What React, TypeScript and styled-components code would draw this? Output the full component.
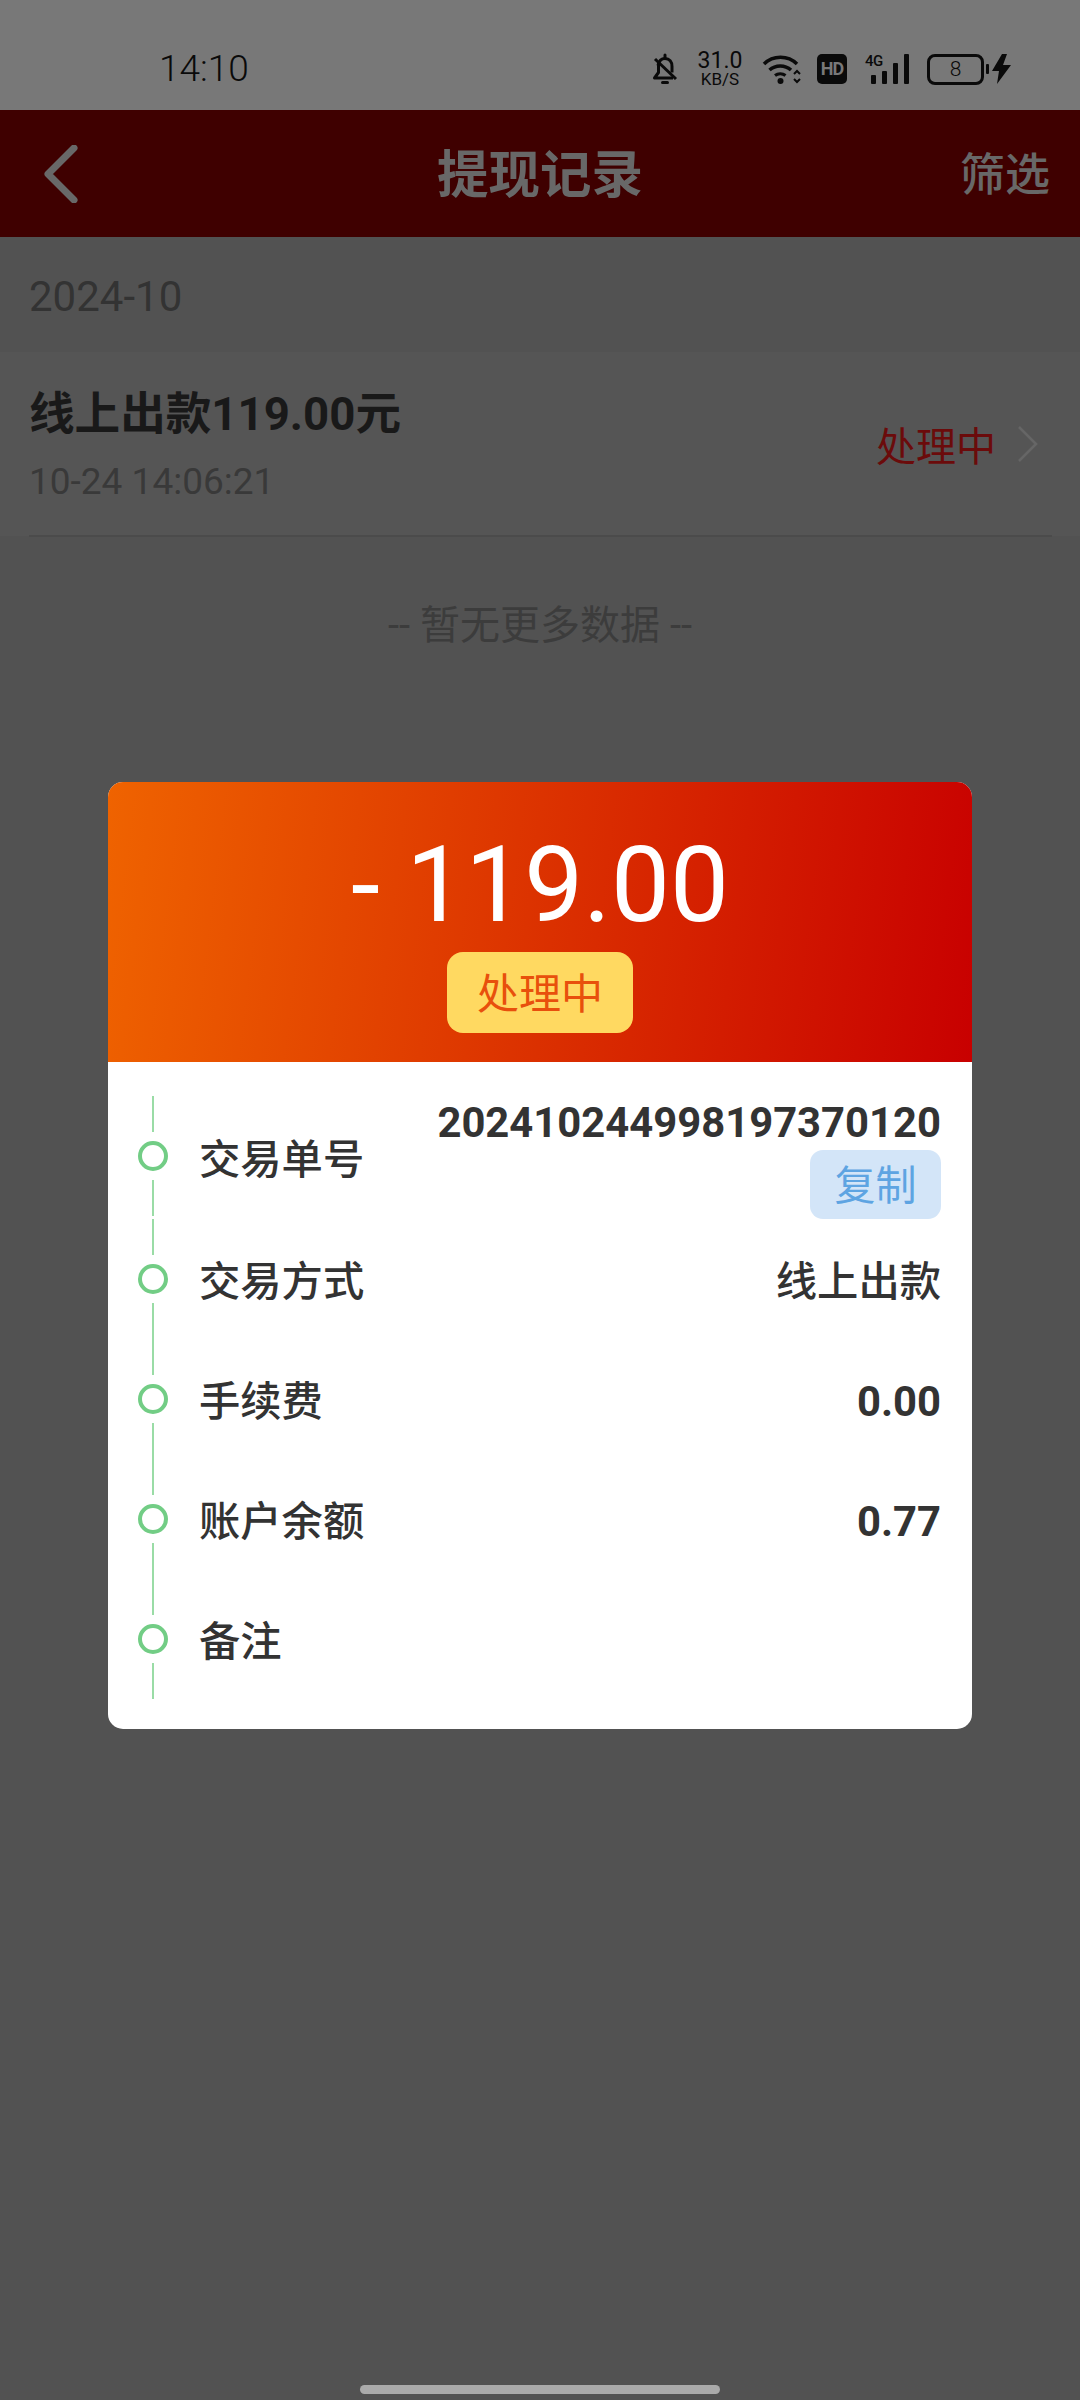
import React from "react";
import styled, { createGlobalStyle } from "styled-components";

const FONT = `Roboto, "Noto Sans CJK SC", sans-serif`;

const GlobalStyle = createGlobalStyle`
  html, body {
    margin: 0;
    padding: 0;
    background: #525252;
    font-family: ${FONT};
  }
`;

const Screen = styled.div({
  position: "relative",
  width: 1080,
  height: 2400,
  overflow: "hidden",
  display: "flex",
  flexDirection: "column",
  background: "#525252",
});

const StatusBar = styled.div({
  height: 110,
  flexShrink: 0,
  boxSizing: "border-box",
  padding: "28px 69px 0 159px",
  display: "flex",
  alignItems: "center",
  justifyContent: "space-between",
  background: "#787878",
  color: "#0a0a0a",
});

const Clock = styled.span({
  fontSize: 37,
  fontWeight: 300,
  lineHeight: "40px",
});

const StatusIcons = styled.div({
  display: "flex",
  alignItems: "center",
  height: 30,
});

const Speed = styled.div({
  width: 46,
  marginLeft: 19,
  display: "flex",
  flexDirection: "column",
  alignItems: "center",
  "& > b": { fontSize: 23, fontWeight: 400, lineHeight: "21px" },
  "& > span": { fontSize: 17, fontWeight: 400, lineHeight: "17px" },
});

const HdBadge = styled.span({
  width: 30,
  height: 30,
  marginLeft: 15,
  borderRadius: 5,
  background: "#0a0a0a",
  color: "#787878",
  fontSize: 18,
  fontWeight: 700,
  letterSpacing: -1,
  lineHeight: "30px",
  textAlign: "center",
});

const Network = styled.div({
  position: "relative",
  width: 44,
  height: 30,
  marginLeft: 18,
  "& > span": {
    position: "absolute",
    left: 0,
    top: 0,
    fontSize: 15,
    fontWeight: 500,
    letterSpacing: -0.5,
    lineHeight: "15px",
  },
  "& > svg": { position: "absolute", left: 0, top: 0 },
});

const Battery = styled.div({
  width: 51,
  height: 25,
  marginLeft: 18,
  border: "3px solid #0a0a0a",
  borderRadius: 8,
  fontSize: 21,
  fontWeight: 300,
  lineHeight: "25px",
  textAlign: "center",
});

const BatteryTip = styled.span({
  width: 3,
  height: 10,
  marginLeft: 2,
  background: "#0a0a0a",
  borderRadius: 1,
});

const NavBar = styled.div({
  height: 127,
  flexShrink: 0,
  boxSizing: "border-box",
  padding: "4px 30px 0",
  display: "grid",
  gridTemplateColumns: "1fr auto 1fr",
  alignItems: "center",
  background: "#3f0000",
  color: "#686868",
});

const BackSlot = styled.div({
  display: "flex",
  paddingLeft: 13,
  marginTop: -4,
});

const NavTitle = styled.div({
  fontSize: 51.5,
  fontWeight: 700,
  lineHeight: "60px",
});

const NavAction = styled.div({
  justifySelf: "end",
  fontSize: 45,
  lineHeight: "60px",
  fontWeight: 500,
});

const MonthRow = styled.div({
  height: 115,
  flexShrink: 0,
  boxSizing: "border-box",
  padding: "4px 29px 0",
  display: "flex",
  alignItems: "center",
  fontSize: 42,
  color: "#333333",
  background: "#525252",
});

const RecordRow = styled.div({
  height: 184,
  flexShrink: 0,
  boxSizing: "border-box",
  margin: 0,
  background: "#555555",
  padding: "0 28px 0 29px",
});

const RecordInner = styled.div({
  height: 183,
  display: "flex",
  alignItems: "center",
  justifyContent: "space-between",
  borderBottom: "2px solid #4b4b4b",
  boxSizing: "content-box",
});

const RecordText = styled.div({
  display: "flex",
  flexDirection: "column",
  gap: 12,
  paddingTop: 4,
});

const RecordTitle = styled.div({
  fontSize: 45.6,
  fontWeight: 700,
  lineHeight: "60px",
  color: "#191919",
});

const RecordTime = styled.div({
  fontSize: 37,
  lineHeight: "50px",
  color: "#393939",
});

const RecordStatus = styled.div({
  display: "flex",
  alignItems: "center",
  gap: 21,
  marginRight: 13,
  fontSize: 40,
  color: "#6b0b0b",
});

const EndNote = styled.div({
  marginTop: 60,
  textAlign: "center",
  fontSize: 40,
  lineHeight: "60px",
  color: "#3c3c3c",
});

// sits over the list, below the status bar, and centres the dialog
const ModalLayer = styled.div({
  position: "absolute",
  left: 0,
  right: 0,
  top: 110,
  bottom: 0,
  display: "flex",
  alignItems: "center",
  justifyContent: "center",
});

const Card = styled.div({
  width: 864,
  borderRadius: 15,
  overflow: "hidden",
  background: "#ffffff",
});

const CardHead = styled.div({
  height: 280,
  boxSizing: "border-box",
  paddingTop: 42,
  display: "flex",
  flexDirection: "column",
  alignItems: "center",
  background: "linear-gradient(97deg, #ef6300 0%, #c80000 100%)",
});

const Amount = styled.div({
  fontSize: 105,
  lineHeight: "124px",
  color: "#ffffff",
});

const StateChip = styled.div({
  width: 186,
  height: 81,
  marginTop: 4,
  borderRadius: 16,
  background: "#ffd961",
  color: "#e8500c",
  fontSize: 42,
  lineHeight: "86px",
  textAlign: "center",
  overflow: "hidden",
});

const CardBody = styled.div({
  padding: "34px 31px 30px 30px",
});

const DetailRow = styled.div({
  display: "flex",
  alignItems: "center",
  minHeight: 120,
});

const Timeline = styled.div({
  alignSelf: "flex-start",
  width: 30,
  height: 120,
  flexShrink: 0,
  display: "flex",
  flexDirection: "column",
  alignItems: "center",
});

const TimelineLine = styled.span<{ $pos: "top" | "bottom" }>`
  width: 2px;
  height: 36px;
  background: #9adca6;
  margin-${({ $pos }) => ($pos === "top" ? "bottom" : "top")}: 9px;
`;

const TimelineDot = styled.span({
  width: 30,
  height: 30,
  boxSizing: "border-box",
  border: "4px solid #72cd85",
  borderRadius: "50%",
});

const Label = styled.div({
  marginLeft: 31,
  paddingTop: 6,
  fontSize: 41.3,
  fontWeight: 500,
  lineHeight: "54px",
  color: "#333333",
});

const Value = styled.div<{ $text?: boolean; $copyable?: boolean }>`
  margin-left: auto;
  padding-top: ${({ $copyable }) => ($copyable ? 0 : 6)}px;
  display: flex;
  flex-direction: column;
  align-items: flex-end;
  font-size: ${({ $text }) => ($text ? 41.3 : 41.8)}px;
  font-weight: ${({ $text }) => ($text ? 500 : 700)};
  line-height: 54px;
  color: #333333;
`;

const CopyButton = styled.div({
  width: 131,
  height: 69,
  borderRadius: 13,
  background: "#d3e5f8",
  color: "#5ea4e2",
  fontSize: 41,
  fontWeight: 400,
  lineHeight: "73px",
  textAlign: "center",
  overflow: "hidden",
});

const HomeIndicator = styled.div({
  position: "absolute",
  left: 360,
  bottom: 6,
  width: 360,
  height: 9,
  borderRadius: 5,
  background: "#aaaaaa",
});

const BellOffIcon = () => (
  <svg width="26" height="32" viewBox="0 0 26 32" fill="none" stroke="#0a0a0a" strokeWidth="3">
    <path d="M13 2v3" strokeLinecap="round" />
    <path d="M6 12.500c1-5 3.500-7 7-7 4.500 0 7 3.500 7 8v6" />
    <path d="M6.500 11.500v8L2.500 25H21" strokeLinejoin="round" />
    <path d="M3 6l21 20" />
    <path d="M10.500 29.500h5" strokeLinecap="round" />
  </svg>
);

const WifiIcon = () => (
  <svg width="40" height="30" viewBox="0 0 40 30" fill="none" stroke="#0a0a0a" style={{ marginLeft: 19 }}>
    <path d="M2 10C11 1 26 1 35 10" strokeWidth="3.500" />
    <path d="M7.500 16C13.500 10.500 23 10.500 29 16" strokeWidth="3.500" />
    <path d="M13 21.500c3-2.500 7.500-2.500 10.500 0" strokeWidth="3" />
    <circle cx="18.500" cy="27" r="3" fill="#0a0a0a" stroke="none" />
    <path d="M32 20l3-3 3 3M32 25l3 3 3-3" strokeWidth="2" />
  </svg>
);

const SignalBars = () => (
  <svg width="44" height="30" viewBox="0 0 44 30" fill="#0a0a0a">
    <rect x="6" y="21" width="5" height="9" rx="1" />
    <rect x="17" y="17" width="5" height="13" rx="1" />
    <rect x="28" y="9" width="5" height="21" rx="1" />
    <rect x="39" y="0" width="5" height="30" rx="1" />
  </svg>
);

const BoltIcon = () => (
  <svg width="19" height="30" viewBox="0 0 19 30" fill="#0a0a0a" style={{ marginLeft: 3 }}>
    <path d="M10 0L0 17h7L5 30l14-19h-8l4-11z" />
  </svg>
);

const BackIcon = () => (
  <svg width="36" height="58" viewBox="0 0 36 58" fill="none" stroke="#686868" strokeWidth="7" strokeLinecap="round" strokeLinejoin="round">
    <path d="M31 3L5 29l26 26" />
  </svg>
);

const ChevronIcon = () => (
  <svg width="22" height="38" viewBox="0 0 22 38" fill="none" stroke="#666666" strokeWidth="2.500">
    <path d="M2 2l17 17L2 36" />
  </svg>
);

interface Detail {
  label: string;
  value?: string;
  copyable?: boolean;
  isText?: boolean;
}

const details: Detail[] = [
  { label: "交易单号", value: "202410244998197370120", copyable: true },
  { label: "交易方式", value: "线上出款", isText: true },
  { label: "手续费", value: "0.00" },
  { label: "账户余额", value: "0.77" },
  { label: "备注" },
];

export default function App() {
  return (
    <Screen>
      <GlobalStyle />
      <StatusBar>
        <Clock>14:10</Clock>
        <StatusIcons>
          <BellOffIcon />
          <Speed>
            <b>31.0</b>
            <span>KB/S</span>
          </Speed>
          <WifiIcon />
          <HdBadge>HD</HdBadge>
          <Network>
            <SignalBars />
            <span>4G</span>
          </Network>
          <Battery>8</Battery>
          <BatteryTip />
          <BoltIcon />
        </StatusIcons>
      </StatusBar>
      <NavBar>
        <BackSlot>
          <BackIcon />
        </BackSlot>
        <NavTitle>提现记录</NavTitle>
        <NavAction>筛选</NavAction>
      </NavBar>
      <MonthRow>2024-10</MonthRow>
      <RecordRow>
        <RecordInner>
          <RecordText>
            <RecordTitle>线上出款119.00元</RecordTitle>
            <RecordTime>10-24 14:06:21</RecordTime>
          </RecordText>
          <RecordStatus>
            处理中
            <ChevronIcon />
          </RecordStatus>
        </RecordInner>
      </RecordRow>
      <EndNote>-- 暂无更多数据 --</EndNote>

      <ModalLayer>
        <Card>
          <CardHead>
            <Amount>- 119.00</Amount>
            <StateChip>处理中</StateChip>
          </CardHead>
          <CardBody>
            {details.map((d) => (
              <DetailRow key={d.label}>
                <Timeline>
                  <TimelineLine $pos="top" />
                  <TimelineDot />
                  <TimelineLine $pos="bottom" />
                </Timeline>
                <Label>{d.label}</Label>
                {d.value && (
                  <Value $text={d.isText} $copyable={d.copyable}>
                    {d.value}
                    {d.copyable && <CopyButton>复制</CopyButton>}
                  </Value>
                )}
              </DetailRow>
            ))}
          </CardBody>
        </Card>
      </ModalLayer>
      <HomeIndicator />
    </Screen>
  );
}
